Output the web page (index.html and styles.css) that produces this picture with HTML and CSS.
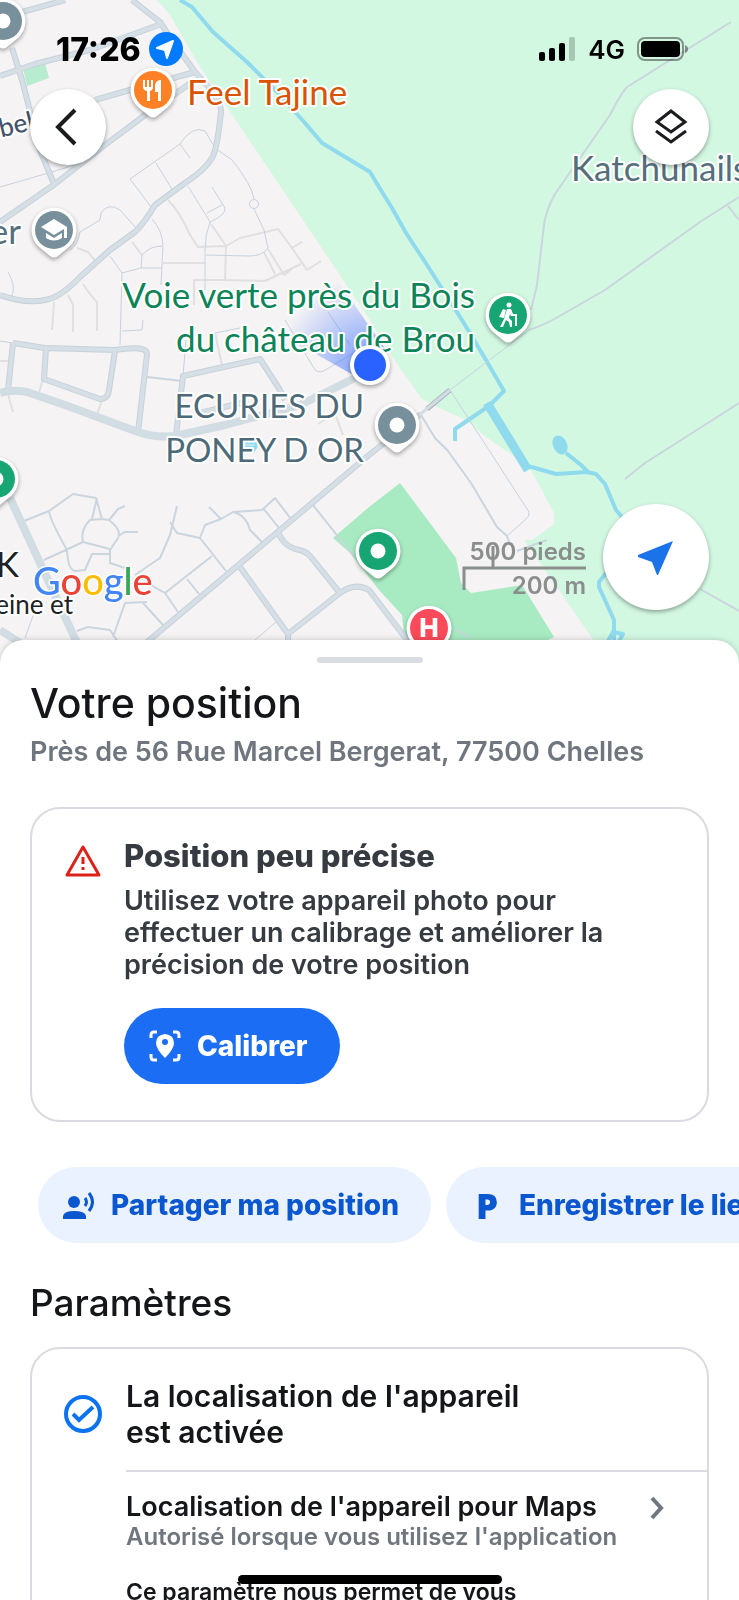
FILE: index.html
```html
<!DOCTYPE html>
<html lang="fr">
<head>
    <meta charset="UTF-8">
    <meta name="viewport" content="width=device-width, initial-scale=1.0">
    <title>Votre position</title>
    <link rel="stylesheet" href="styles.css">
</head>
<body>

<div class="screen">
    <!-- Map -->
    <div class="map">
        <svg class="map-canvas" viewBox="0 0 739 664" preserveAspectRatio="xMidYMin slice">
            <defs>
                <path id="pin" d="M-15 17A22.5 22.5 0 1 1 15 17L4 26Q0 29 -4 26Z"/>
                <radialGradient id="beam" gradientUnits="userSpaceOnUse" cx="369" cy="365" r="90">
                    <stop offset="0" stop-color="#2962ff" stop-opacity="0.6"/>
                    <stop offset="1" stop-color="#2962ff" stop-opacity="0"/>
                </radialGradient>
            </defs>

            <!-- Land -->
            <rect width="739" height="664" fill="#f5f3f4"/>
            <path fill="#d3f8e2" d="M157 0L170 15L200 67L370 320L389 352L421 398L439 408L466 420L486 437L512 455L532 472L554 513V524L532 540H524L540 563L610 664H739V0Z"/>
            <path fill="#a8ebc3" d="M400 483L369 507L333 538L350 553L379 590L402 615L407 664H546V641L554 637L522 585L471 593L461 583L456 558Z"/>
            <path fill="#b8ecd0" d="M23 68L45 63L49 78L27 86Z"/>

            <!-- Water -->
            <g class="water">
                <path d="M180 0L192 7L213 32L247 62L277 92L305 123L322 143L370 172L379 187L392 208L406 233L427 265L462 320L486 360L504 391L489 406L455 429V441"/>
                <path stroke-width="9" d="M487 403L528 470"/>
                <path d="M528 466L556 474L587 472L596 474L605 484L616 510L629 525M606 573L599 582V587L614 620V645M566 453L581 465L589 473"/>
                <path d="M608 641L613 632L623 634L617 645Z"/>
                <path stroke-width="3" d="M244 443H256V447H244M256 447L252 453"/>
            </g>
            <ellipse cx="560" cy="445" rx="7" ry="10" fill="#90daee" transform="rotate(-25 560 445)"/>

            <!-- Footpaths -->
            <g class="path-road">
                <path d="M168 200Q180 212 190 235L198 247L226 246L240 238L278 229L292 248L307 270L321 261M226 246L211 224M226 246L225 280L265 281L301 264M163 263H205M264 252L275 274M268 249L284 275L292 269M292 248L302 242M225 280H194V305M83 284Q90 295 97 302V331M68 295L73 305V332M54 302L52 330M8 394L13 412M43 379L39 393M102 400L97 414M215 333L222 365M0 361H8M318 424L335 414L343 435M132 242L142 255M77 248L88 252L97 263"/>
            </g>

            <!-- Residential streets -->
            <g class="street">
                <path d="M152 208L130 179L180 144Q192 125 205 131L215 148M156 163L173 191M180 144L190 158M215 148L232 160Q252 185 254 199M254 209L264 230L268 248Q262 256 250 256L206 255M188 186L210 222Q205 235 205 250V290M212 187L225 208Q226 215 210 222M207 213L222 205M137 229L120 210Q108 202 101 213L100 220L80 232Q78 245 70 250M152 219Q162 230 163 245L161 285M110 256L122 273L120 345M122 273L141 268H161M141 268L142 255Q150 246 162 246M8 272Q16 285 12 296M0 187L45 174L75 165M0 341L13 343M122 331L142 330L143 320M183 376L186 340M215 333L240 328M285 320L315 370Q320 374 327 369L355 352M328 312L350 345M255 640L276 622M37 605L25 638"/>
                <circle cx="254" cy="204" r="4.5"/>
            </g>
            <g class="lane">
                <path d="M24 521L49 511L73 494L96 498L102 519L90 520Q80 530 83 542L110 549M49 511Q50 520 67 550Q68 570 75 571L85 570L92 554L110 554M44 560L83 542M97 498L92 519M102 519L109 520Q122 530 118 538L110 550V563L125 568M109 520L118 509L125 506M118 536L125 532H138M177 506L170 535L160 558L135 575M170 522L177 533L200 538L226 571M200 538L205 525L221 519L233 512L262 510L275 498L291 519M209 507L221 519M233 512Q246 515 250 530L262 542M263 508L279 528M212 556L165 593L147 583M187 579L199 594M165 593L178 612M143 603L163 625M147 602L125 603L113 637M77 631L88 627L110 630L120 645M313 505L355 558M147 377L182 381"/>
                <path d="M731 22L627 87Q620 95 610 115L555 194Q546 210 544 225L537 285L531 310M739 197L700 222L605 290L565 313Q545 325 529 330M728 206L739 220M739 403L645 463L625 479M421 415L435 438L448 451L471 483L497 527L507 536L510 545M700 589L739 611M455 629L470 638M517 551L547 540"/>
            </g>
            <g class="street"><path d="M529 330L450 390L529 512Q530 516 525 520L507 536"/></g>

            <!-- Main roads, edge then fill -->
            <g class="road-edge">
                <path d="M0 76L35 64L90 50L164 23M22 12L65 0M95 100L130 90L195 72M12 48L22 80L40 150L54 184M0 222L55 184L105 145L145 115L195 80"/>
                <path d="M132 0L160 22L172 40L195 72Q222 100 221 112Q217 150 212 158Q205 170 185 183L155 205Q145 222 135 232L110 250L80 277Q60 298 45 300Q25 304 0 295"/>
                <path d="M13 343L45 348L115 350Q147 345 147 354L138 432M13 343L8 390M46 348L44 379L100 399Q108 399 109 390L115 351M176 435L183 376L260 359L280 390L285 400M200 413L245 402"/>
                <path d="M140 648L280 530L369 455L421 414M240 567L288 634L340 593Q355 582 369 590L410 644M278 532Q283 545 295 549Q306 551 310 556L340 593M288 634V645"/>
            </g>
            <g class="road-fill">
                <path d="M0 76L35 64L90 50L164 23M22 12L65 0M95 100L130 90L195 72M12 48L22 80L40 150L54 184M0 222L55 184L105 145L145 115L195 80"/>
                <path d="M132 0L160 22L172 40L195 72Q222 100 221 112Q217 150 212 158Q205 170 185 183L155 205Q145 222 135 232L110 250L80 277Q60 298 45 300Q25 304 0 295"/>
                <path d="M13 343L45 348L115 350Q147 345 147 354L138 432M13 343L8 390M46 348L44 379L100 399Q108 399 109 390L115 351M176 435L183 376L260 359L280 390L285 400M200 413L245 402"/>
                <path d="M140 648L280 530L369 455L421 414M240 567L288 634L340 593Q355 582 369 590L410 644M278 532Q283 545 295 549Q306 551 310 556L340 593M288 634V645"/>
            </g>
            <g class="avenue">
                <path d="M0 393Q12 389 27 392L65 405L138 432Q155 438 175 436L225 425L300 405L355 378M10 498L78 645M0 630L28 648"/>
            </g>
            <path fill="none" stroke="#a9b5c0" stroke-width="5" d="M427 409L450 390"/>
            <path fill="none" stroke="#d3dce3" stroke-width="3" d="M418 416L450 390"/>

            <path fill="url(#beam)" d="M362 380L270 328L330 270L386 350Z"/>

            <!-- Place labels -->
            <g class="label">
                <text x="187" y="105" fill="#d95300">Feel Tajine</text>
                <text x="571" y="181" fill="#546e7a">Katchunails</text>
                <text x="475" y="308" text-anchor="end" fill="#0b8457">Voie verte près du Bois</text>
                <text x="475" y="352" text-anchor="end" fill="#0b8457">du château de Brou</text>
                <text class="label-caps" x="364" y="418" text-anchor="end" fill="#4d6a78">ECURIES DU</text>
                <text class="label-caps" x="364" y="462" text-anchor="end" fill="#4d6a78">PONEY D OR</text>
                <text x="21" y="244" text-anchor="end" fill="#546e7a">er</text>
                <text x="19" y="577" text-anchor="end" fill="#202124">K</text>
                <text class="label-small" x="73" y="614" text-anchor="end" fill="#202124">eine et</text>
                <text class="label-street" x="-13" y="141" fill="#44536b" transform="rotate(-14 -13 141)">obel</text>
            </g>

            <!-- Pins -->
            <g class="pins">
                <g transform="translate(3 21)"><use href="#pin"/><circle r="19" fill="#78909c"/><circle r="7.5"/></g>
                <g transform="translate(153 90)">
                    <use href="#pin"/><circle r="19" fill="#ff8126"/>
                    <path d="M-10 -10H-8V-3H-6V-10H-4V-3H-2V-10H0V-3Q0 0 -3 1V11H-6V1Q-10 0 -10 -3ZM8 -10V11H5V2H2V-5Q3 -10 8 -10Z"/>
                </g>
                <g transform="translate(54 230)">
                    <use href="#pin"/><circle r="19" fill="#78909c"/>
                    <path d="M0 -11L13 -3V8H10V-1L0 5L-13 -3ZM-8 3L0 8L8 3V8Q0 13 -8 8Z"/>
                </g>
                <g transform="translate(508 315)">
                    <use href="#pin"/><circle r="19" fill="#17a673"/>
                    <circle cx="1" cy="-10" r="2.5"/>
                    <path d="M-5 -6L-2 -5L-4 3L-9 2ZM-1 -6H3L5 -1H9V11H7V1H3L2 -1L1 3L4 6V12H2L1 7L-2 5L-5 12H-8L-4 4Z"/>
                </g>
                <g transform="translate(397 425)"><use href="#pin"/><circle r="19" fill="#78909c"/><circle r="7.5"/></g>
                <g transform="translate(-4 479)"><use href="#pin"/><circle r="19" fill="#17a673"/><circle r="7.5"/></g>
                <g transform="translate(378 551)"><use href="#pin"/><circle r="19" fill="#17a673"/><circle r="7.5"/></g>
                <g transform="translate(429 628)"><use href="#pin"/><circle r="19" fill="#fb4a5a"/><text class="pin-letter" y="9" text-anchor="middle">H</text></g>
                <circle cx="370" cy="365" r="20"/>
            </g>
            <circle cx="370" cy="365" r="16" fill="#2962ff"/>

            <!-- Scale -->
            <g class="scale">
                <path d="M464 590V568H586M493 568V546"/>
                <text x="586" y="560" text-anchor="end">500 pieds</text>
                <text x="586" y="594" text-anchor="end">200 m</text>
            </g>

            <text class="google" x="33" y="595"><tspan fill="#4285f4">G</tspan><tspan fill="#ea4335">o</tspan><tspan fill="#fbbc04">o</tspan><tspan fill="#4285f4">g</tspan><tspan fill="#34a853">l</tspan><tspan fill="#ea4335">e</tspan></text>
        </svg>

        <div class="map-overlay">
            <!-- Status bar -->
            <div class="status-bar">
                <div class="status-left">
                    <span class="clock">17:26</span>
                    <svg width="34" height="34" viewBox="0 0 34 34">
                        <circle cx="17" cy="17" r="17" fill="#007aff"/>
                        <path d="M24 9L8 16L16 18L18 26Z" fill="#fff" stroke="#fff" stroke-width="2" stroke-linejoin="round"/>
                    </svg>
                </div>
                <div class="status-right">
                    <svg width="37" height="24" viewBox="0 0 37 24">
                        <rect x="0" y="15" width="6" height="9" rx="2"/>
                        <rect x="10" y="11" width="6" height="13" rx="2"/>
                        <rect x="20" y="6" width="6" height="18" rx="2"/>
                        <rect x="30" y="0" width="6" height="24" rx="2" opacity="0.2"/>
                    </svg>
                    <span class="network">4G</span>
                    <svg width="52" height="24" viewBox="0 0 52 24">
                        <rect x="1" y="1" width="45" height="22" rx="7" fill="none" stroke="#000" stroke-opacity="0.4" stroke-width="2"/>
                        <rect x="4" y="4" width="39" height="16" rx="4"/>
                        <path d="M48 8Q51 9 51 12Q51 15 48 16Z" opacity="0.4"/>
                    </svg>
                </div>
            </div>

            <div class="map-controls">
                <button class="round-button" aria-label="Retour">
                    <svg width="76" height="76" viewBox="0 0 76 76"><path d="M45 21L28 38L45 55" fill="none" stroke="#1b1c1f" stroke-width="4"/></svg>
                </button>
                <button class="round-button" aria-label="Calques">
                    <svg width="76" height="76" viewBox="0 0 76 76"><path d="M38 22L52 33L38 43L24 33ZM23 42L38 53L53 42" fill="none" stroke="#1b1c1f" stroke-width="3"/></svg>
                </button>
            </div>

            <button class="round-button locate-button" aria-label="Recentrer">
                <svg width="106" height="106" viewBox="0 0 106 106"><path d="M70 37L55 71H54L49 58L35 53V51Z" fill="#1a73e8"/></svg>
            </button>
        </div>
    </div>

    <!-- Bottom sheet -->
    <div class="sheet">
        <div class="handle"></div>
        <h1>Votre position</h1>
        <p class="address">Près de 56 Rue Marcel Bergerat, 77500 Chelles</p>

        <div class="card accuracy-card">
            <svg class="card-icon warning-icon" viewBox="0 0 38 34" fill="none" stroke="#dc2218">
                <path stroke-width="3" stroke-linejoin="round" d="M19 3L35 31H3Z"/>
                <path stroke-width="3" d="M19 13V20M19 23V26"/>
            </svg>
            <div class="card-body">
                <h2>Position peu précise</h2>
                <p>Utilisez votre appareil photo pour effectuer un calibrage et améliorer la précision de votre position</p>
                <button class="primary-button">
                    <svg width="32" height="32" viewBox="0 0 32 32">
                        <path d="M2 8V5Q2 2 5 2H8M24 2H27Q30 2 30 5V8M30 24V27Q30 30 27 30H24M8 30H5Q2 30 2 27V24" fill="none" stroke="#fff" stroke-width="3"/>
                        <path fill="#fff" fill-rule="evenodd" d="M16 4Q25 5 25 13Q25 19 16 28Q7 19 7 13Q7 5 16 4ZM16 9A3 3 0 1 0 16 15A3 3 0 1 0 16 9Z"/>
                    </svg>
                    Calibrer
                </button>
            </div>
        </div>

        <div class="chips">
            <button class="chip">
                <svg width="32" height="32" viewBox="0 0 32 32" fill="#0b57d0">
                    <circle cx="11" cy="13" r="6"/>
                    <path d="M0 30V27Q1 22 11 22Q22 22 23 27V30Z"/>
                    <path d="M22 9Q25 13 22 17M26 4Q33 13 26 22" fill="none" stroke="#0b57d0" stroke-width="3"/>
                </svg>
                Partager ma position
            </button>
            <button class="chip">
                <span class="parking">P</span>
                Enregistrer le lieu de stationnement
            </button>
        </div>

        <h1 class="settings-title">Paramètres</h1>
        <div class="card settings-card">
            <div class="settings-head">
                <svg class="card-icon" viewBox="0 0 38 38" fill="none" stroke="#0b72f0">
                    <circle cx="19" cy="19" r="17" stroke-width="4"/>
                    <path stroke-width="4" d="M9 19L15 25L29 12"/>
                </svg>
                <h2>La localisation de l'appareil<br>est activée</h2>
            </div>
            <div class="settings-list">
                <a class="settings-row" href="#">
                    <span>
                        <strong>Localisation de l'appareil pour Maps</strong>
                        <small>Autorisé lorsque vous utilisez l'application</small>
                    </span>
                    <svg width="16" height="24" viewBox="0 0 16 24"><path d="M3 2L12 12L3 22" fill="none" stroke="#6f767d" stroke-width="4"/></svg>
                </a>
                <p class="note">Ce paramètre nous permet de vous</p>
            </div>
        </div>
    </div>

    <div class="home-indicator"></div>
</div>

</body>
</html>
```
FILE: styles.css
```css
* {
    box-sizing: border-box;
}
body {
    margin: 0;
    font-family: Inter, "Liberation Sans", sans-serif;
    background-color: #fff;
    color: #141619;
}
h1, h2, p {
    margin: 0;
}
button {
    border: none;
    padding: 0;
    font-family: inherit;
    cursor: pointer;
}
.screen {
    height: 100vh;
    overflow: hidden;
}

/* Map */
.map {
    position: relative;
    height: 664px;
}
.map-canvas {
    display: block;
    width: 100%;
    height: 100%;
}
.map-overlay {
    position: absolute;
    inset: 0;
    display: flex;
    flex-direction: column;
}
.water {
    fill: none;
    stroke: #90daee;
    stroke-width: 4;
    stroke-linejoin: round;
}
.path-road, .street, .lane {
    fill: none;
    stroke: #e0e0e2;
    stroke-width: 2;
    stroke-linejoin: round;
}
.street {
    stroke: #c6d3de;
    stroke-width: 1;
}
.lane {
    stroke: #cad5de;
}
.road-edge, .road-fill, .avenue {
    fill: none;
    stroke: #c6d2da;
    stroke-width: 6;
    stroke-linejoin: round;
}
.road-fill {
    stroke: #d5dfe5;
    stroke-width: 4;
}
.avenue {
    stroke: #d1dce3;
    stroke-width: 8;
}
.label {
    font-family: Lato, sans-serif;
    font-size: 35px;
    paint-order: stroke;
    stroke: #fff;
    stroke-width: 4px;
    stroke-linejoin: round;
}
.label-caps {
    font-size: 33px;
}
.label-small {
    font-size: 26px;
}
.label-street {
    font-size: 26px;
    font-weight: 500;
}
.pins {
    fill: #fff;
    filter: drop-shadow(0 2px 2px rgba(0,0,0,0.35));
}
.pin-letter {
    font-size: 26px;
    font-weight: 800;
}
.scale {
    fill: #8a8f8d;
    font-size: 24px;
    font-weight: 600;
}
.scale path {
    fill: none;
    stroke: #8a8f8d;
    stroke-width: 3;
}
.google {
    font-family: Lato, sans-serif;
    font-size: 38px;
    font-weight: 500;
    paint-order: stroke;
    stroke: #fff;
    stroke-width: 3px;
}

/* Status bar */
.status-bar {
    display: flex;
    justify-content: space-between;
    align-items: center;
    height: 36px;
    margin-top: 31px;
    padding: 0 50px 0 56px;
    color: #000;
}
.status-left, .status-right {
    display: flex;
    align-items: center;
    gap: 8px;
}
.status-right {
    gap: 12px;
}
.clock {
    font-size: 32px;
    font-weight: 800;
}
.network {
    font-size: 26px;
    font-weight: 600;
}

/* Map buttons */
.map-controls {
    display: flex;
    justify-content: space-between;
    margin-top: 22px;
    padding: 0 30px;
}
.round-button {
    display: flex;
    border-radius: 50%;
    background-color: #fff;
    box-shadow: 0 2px 4px rgba(0,0,0,0.35);
}
.locate-button {
    align-self: flex-end;
    margin-top: auto;
    margin-right: 30px;
    margin-bottom: 54px;
}

/* Bottom sheet */
.sheet {
    position: relative;
    margin-top: -24px;
    padding: 17px 30px 0;
    border-radius: 24px 24px 0 0;
    background-color: #fff;
    box-shadow: 0 0 6px rgba(0,0,0,0.2);
}
.handle {
    width: 106px;
    height: 6px;
    margin: 0 auto 16px;
    border-radius: 3px;
    background-color: #dadce3;
}
h1 {
    font-size: 41px;
    line-height: 48px;
    font-weight: 500;
}
h2 {
    font-size: 30px;
    line-height: 36px;
    font-weight: 600;
}
.address {
    margin-top: 9px;
    font-size: 27px;
    line-height: 32px;
    font-weight: 600;
    color: #6f767d;
}
.card {
    border: 2px solid #dadbe1;
    border-radius: 30px;
}
.card-icon {
    flex: none;
    width: 38px;
}
.accuracy-card {
    display: flex;
    align-items: flex-start;
    gap: 22px;
    margin-top: 39px;
    padding: 29px 72px 36px 32px;
    color: #353b40;
}
.accuracy-card h2 {
    font-size: 31px;
    font-weight: 800;
}
.accuracy-card p {
    margin: 11px 0 27px;
    font-size: 27px;
    line-height: 32px;
    font-weight: 600;
}
.warning-icon {
    margin-top: 6px;
}
.primary-button, .chip {
    display: flex;
    align-items: center;
    flex: none;
    gap: 16px;
    height: 76px;
    padding: 0 32px 0 25px;
    border-radius: 38px;
    font-size: 28px;
    font-weight: 800;
    white-space: nowrap;
}
.primary-button {
    background-color: #1b6ef3;
    color: #fff;
}
.chips {
    display: flex;
    gap: 15px;
    margin: 45px -30px 0 0;
    padding-left: 8px;
    overflow: hidden;
}
.chip {
    background-color: #ebf2ff;
    color: #0b57d0;
}
.parking {
    width: 32px;
    font-family: "Open Sans", sans-serif;
    font-size: 35px;
    font-weight: 800;
}
.settings-title {
    margin: 38px 0 22px;
    font-size: 37px;
    line-height: 44px;
}
.settings-head {
    display: flex;
    align-items: center;
    gap: 24px;
    padding: 29px 32px 20px;
}
.settings-list {
    margin-left: 94px;
    border-top: 2px solid #dadbe1;
    padding: 19px 0 60px;
}
.settings-row {
    display: flex;
    justify-content: space-between;
    align-items: flex-start;
    padding-right: 42px;
    color: inherit;
    text-decoration: none;
}
.settings-row svg {
    margin-top: 5px;
}
.settings-row strong, .settings-row small {
    display: block;
    font-size: 27px;
    line-height: 32px;
    font-weight: 600;
}
.settings-row small {
    font-size: 24px;
    line-height: 28px;
    color: #6f767d;
}
.note {
    margin-top: 27px;
    font-size: 23px;
    line-height: 28px;
    font-weight: 600;
}
.home-indicator {
    position: fixed;
    bottom: 16px;
    left: 50%;
    width: 264px;
    height: 9px;
    margin-left: -132px;
    border-radius: 5px;
    background-color: #000;
}
```
